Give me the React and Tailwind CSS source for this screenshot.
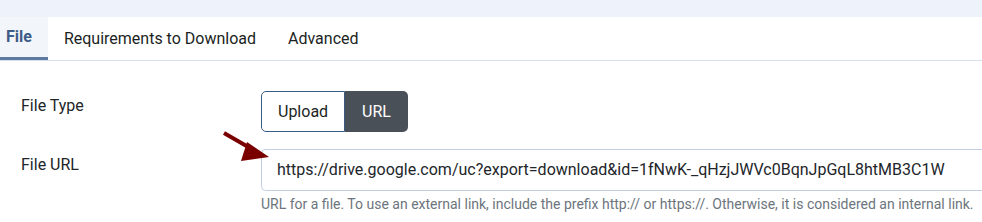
import React from "react";

const tabs = ["File", "Requirements to Download", "Advanced"];

export default function App() {
  return (
    <div className="relative w-[982px] h-[222px] bg-white overflow-hidden font-['Roboto',sans-serif] text-[#212529]">
      {/* top strip */}
      <div className="h-[17px] bg-[#eef3fb]" />

      {/* tabs */}
      <div className="flex h-[44px] border-b border-[#d7e0ee]">
        {tabs.map((t, i) => (
          <div
            key={t}
            className={
              i === 0
                ? "flex items-center pl-[6px] pr-4 bg-[#f2f5f9] border-b-[3px] border-[#5f7a9f] text-[#3d5c87] font-bold text-[16px]"
                : "flex items-center px-4 text-[16px] text-[#1b1f23]"
            }
          >
            {t}
          </div>
        ))}
      </div>

      {/* form */}
      <div className="pt-[30px] flex flex-col gap-[17px]">
        <div className="flex">
          <div className="w-[261px] pl-[21px] pt-[3px] text-[16px] leading-[24px]">File Type</div>
          <div className="flex h-[41px] text-[16px]">
            <div className="flex items-center px-4 border border-[#3a5a82] rounded-l-[5px] bg-white text-[#1b1f23]">
              Upload
            </div>
            <div className="flex items-center px-[17px] bg-[#495057] text-white rounded-r-[5px]">URL</div>
          </div>
        </div>

        <div className="flex">
          <div className="w-[261px] pl-[21px] pt-[4px] text-[16px] leading-[24px]">File URL</div>
          <div className="flex-1 flex flex-col">
            <div className="h-[42px] flex items-center pl-[15px] border border-r-0 border-[#c2cee1] rounded-l-[5px] text-[16px] text-[#22262a] whitespace-nowrap">
              https://drive.google.com/uc?export=download&amp;id=1fNwK-_qHzjJWVc0BqnJpGqL8htMB3C1W
            </div>
            <div className="mt-[3px] text-[14px] text-[#6c757d] whitespace-nowrap">
              URL for a file. To use an external link, include the prefix http:// or https://. Otherwise, it is considered an internal link.
            </div>
          </div>
        </div>
      </div>

      {/* annotation arrow */}
      <svg className="absolute left-0 top-0" width="982" height="222" viewBox="0 0 982 222">
        <line x1="224" y1="133" x2="250" y2="148" stroke="#7a0000" strokeWidth="4" />
        <polygon points="269,157 247,142 241,161" fill="#7a0000" />
      </svg>
    </div>
  );
}
